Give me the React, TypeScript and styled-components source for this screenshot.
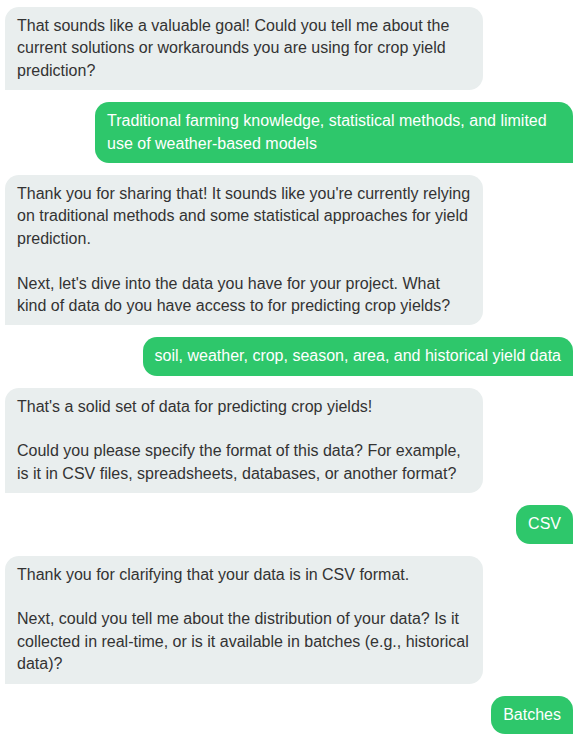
import React from "react";
import styled, { createGlobalStyle } from "styled-components";

const Global = createGlobalStyle`
  html, body { margin: 0; padding: 0; background: #ffffff; }
  body { font-family: "Liberation Sans", Arial, Helvetica, sans-serif; }
`;

const Thread = styled.div`
  display: flex;
  flex-direction: column;
  gap: 12px;
  padding: 7px 7px 7px 5px;
`;

const Bubble = styled.div<{ $user?: boolean }>`
  max-width: 478px;
  box-sizing: border-box;
  padding: 8px 12px;
  font-size: 16px;
  line-height: 1.4;
  white-space: pre-wrap;
  align-self: ${(p) => (p.$user ? "flex-end" : "flex-start")};
  background: ${(p) => (p.$user ? "#2ec76b" : "#e9eeee")};
  color: ${(p) => (p.$user ? "#ffffff" : "#333333")};
  border-radius: ${(p) => (p.$user ? "14px 14px 0 14px" : "14px 14px 14px 0")};
`;

const messages: { user: boolean; text: string }[] = [
  {
    user: false,
    text: "That sounds like a valuable goal! Could you tell me about the current solutions or workarounds you are using for crop yield prediction?",
  },
  {
    user: true,
    text: "Traditional farming knowledge, statistical methods, and limited use of weather-based models",
  },
  {
    user: false,
    text: "Thank you for sharing that! It sounds like you're currently relying on traditional methods and some statistical approaches for yield prediction.\n\nNext, let's dive into the data you have for your project. What kind of data do you have access to for predicting crop yields?",
  },
  {
    user: true,
    text: "soil, weather, crop, season, area, and historical yield data",
  },
  {
    user: false,
    text: "That's a solid set of data for predicting crop yields!\n\nCould you please specify the format of this data? For example, is it in CSV files, spreadsheets, databases, or another format?",
  },
  { user: true, text: "CSV" },
  {
    user: false,
    text: "Thank you for clarifying that your data is in CSV format.\n\nNext, could you tell me about the distribution of your data? Is it collected in real-time, or is it available in batches (e.g., historical data)?",
  },
  { user: true, text: "Batches" },
];

export default function App() {
  return (
    <>
      <Global />
      <Thread>
        {messages.map((m, i) => (
          <Bubble key={i} $user={m.user}>
            {m.text}
          </Bubble>
        ))}
      </Thread>
    </>
  );
}
